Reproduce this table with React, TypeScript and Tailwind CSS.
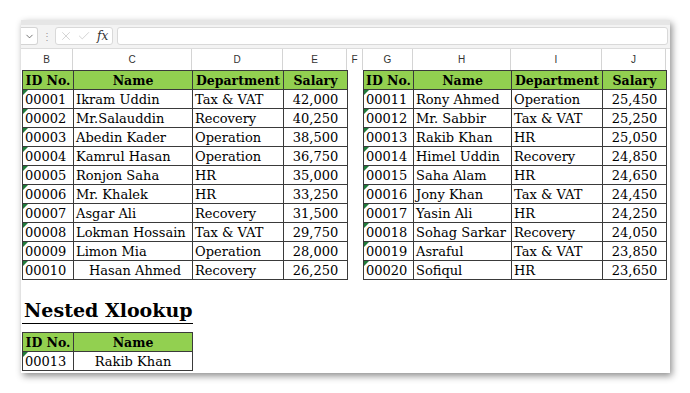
import { X, Check, ChevronDown } from 'lucide-react';

type Row = { id: string; name: string; dept: string; salary: string };

const left: Row[] = [
  { id: '00001', name: 'Ikram Uddin', dept: 'Tax & VAT', salary: '42,000' },
  { id: '00002', name: 'Mr.Salauddin', dept: 'Recovery', salary: '40,250' },
  { id: '00003', name: 'Abedin Kader', dept: 'Operation', salary: '38,500' },
  { id: '00004', name: 'Kamrul Hasan', dept: 'Operation', salary: '36,750' },
  { id: '00005', name: 'Ronjon Saha', dept: 'HR', salary: '35,000' },
  { id: '00006', name: 'Mr. Khalek', dept: 'HR', salary: '33,250' },
  { id: '00007', name: 'Asgar Ali', dept: 'Recovery', salary: '31,500' },
  { id: '00008', name: 'Lokman Hossain', dept: 'Tax & VAT', salary: '29,750' },
  { id: '00009', name: 'Limon Mia', dept: 'Operation', salary: '28,000' },
  { id: '00010', name: 'Hasan Ahmed', dept: 'Recovery', salary: '26,250' },
];

const right: Row[] = [
  { id: '00011', name: 'Rony Ahmed', dept: 'Operation', salary: '25,450' },
  { id: '00012', name: 'Mr. Sabbir', dept: 'Tax & VAT', salary: '25,250' },
  { id: '00013', name: 'Rakib Khan', dept: 'HR', salary: '25,050' },
  { id: '00014', name: 'Himel Uddin', dept: 'Recovery', salary: '24,850' },
  { id: '00015', name: 'Saha Alam', dept: 'HR', salary: '24,650' },
  { id: '00016', name: 'Jony Khan', dept: 'Tax & VAT', salary: '24,450' },
  { id: '00017', name: 'Yasin Ali', dept: 'HR', salary: '24,250' },
  { id: '00018', name: 'Sohag Sarkar', dept: 'Recovery', salary: '24,050' },
  { id: '00019', name: 'Asraful', dept: 'Tax & VAT', salary: '23,850' },
  { id: '00020', name: 'Sofiqul', dept: 'HR', salary: '23,650' },
];

const letters = [
  { l: 'B', w: 'w-[52px]' },
  { l: 'C', w: 'w-[119px]' },
  { l: 'D', w: 'w-[91px]' },
  { l: 'E', w: 'w-[64px]' },
  { l: 'F', w: 'w-[16px]' },
  { l: 'G', w: 'w-[50px]' },
  { l: 'H', w: 'w-[98px]' },
  { l: 'I', w: 'w-[91px]' },
  { l: 'J', w: 'w-[64px]' },
];

// green "number stored as text" flag
function Flag() {
  return (
    <span className="absolute left-0 top-0 w-0 h-0 border-t-[5px] border-t-[#1f7a3a] border-r-[5px] border-r-transparent" />
  );
}

const th = 'border border-[#3a3a3a] bg-[#92d050] font-bold text-center h-[19px] p-0 leading-[17px] text-[12.5px]';
const td = 'border border-[#3a3a3a] h-[19px] p-0 px-[2px] leading-[17px] align-bottom';

function DataTable({ rows, widths }: { rows: Row[]; widths: string[] }) {
  return (
    <table className="table-fixed border-collapse">
      <colgroup>
        {widths.map((w, i) => (
          <col key={i} className={w} />
        ))}
      </colgroup>
      <thead>
        <tr>
          <th className={th}>ID No.</th>
          <th className={th}>Name</th>
          <th className={th}>Department</th>
          <th className={th}>Salary</th>
        </tr>
      </thead>
      <tbody>
        {rows.map((r) => (
          <tr key={r.id}>
            <td className={td + ' relative'}>
              <Flag />
              {r.id}
            </td>
            <td className={td + ' whitespace-nowrap' + (r.name === 'Hasan Ahmed' ? ' pl-[15px]' : '')}>{r.name}</td>
            <td className={td + ' whitespace-nowrap'}>{r.dept}</td>
            <td className={td + ' text-center'}>{r.salary}</td>
          </tr>
        ))}
      </tbody>
    </table>
  );
}

export default function App() {
  return (
    <div className="w-[690px] h-[393px] bg-white overflow-hidden pt-[20px] pl-[21px]">
      <div className="w-[649px] h-[353px] bg-white flex flex-col shadow-[2px_3px_7px_rgba(0,0,0,0.45)]">
        <div className="h-[5px] bg-[#e6e6e6]" />
        <div className="h-[23px] bg-[#f3f3f3] flex items-center pb-[1px]">
          <div className="w-[17px] h-[18px] bg-white border border-l-0 border-[#d4d4d4] rounded-r-[3px] flex items-center justify-center">
            <ChevronDown size={11} strokeWidth={1.6} className="text-[#444]" />
          </div>
          <div className="w-[17px] text-center text-[#999] text-[10px] leading-none">⋮</div>
          <div className="w-[58px] h-[18px] bg-white border border-[#d9d9d9] rounded-[3px] flex items-center pl-[3px] gap-[4px]">
            <X size={14} strokeWidth={1.1} className="text-[#bdbdbd]" />
            <Check size={14} strokeWidth={1.1} className="text-[#bdbdbd]" />
            <span className="text-[12px] italic text-[#333] ml-[2px] font-['DejaVu_Serif',serif]">fx</span>
          </div>
          <div className="ml-[4px] w-[551px] h-[18px] bg-white border border-[#d9d9d9] rounded-[3px]" />
        </div>
        <div className="h-[22px] flex bg-white border-t border-[#dcdcdc]">
          {letters.map((c) => (
            <div
              key={c.l}
              className={c.w + ' border-r border-[#d4d4d4] flex items-center justify-center text-[10px] text-[#333] font-["Liberation_Sans",sans-serif]'}
            >
              {c.l}
            </div>
          ))}
        </div>
        <div className="font-['DejaVu_Serif',serif] text-[13px] text-black">
          <div className="flex pl-[1px] gap-[15px]">
            <DataTable rows={left} widths={['w-[51px]', 'w-[119px]', 'w-[91px]', 'w-[64px]']} />
            <DataTable rows={right} widths={['w-[50px]', 'w-[98px]', 'w-[91px]', 'w-[64px]']} />
          </div>
          <div className="ml-[1px] mt-[15px] w-[171px] h-[29px] border-b border-black flex items-end">
            <span className="text-[19px] font-bold leading-[25px] pl-[2px]">Nested Xlookup</span>
          </div>
          <table className="table-fixed border-collapse mt-[8px] ml-[1px]">
            <colgroup>
              <col className="w-[51px]" />
              <col className="w-[119px]" />
            </colgroup>
            <thead>
              <tr>
                <th className={th}>ID No.</th>
                <th className={th}>Name</th>
              </tr>
            </thead>
            <tbody>
              <tr>
                <td className={td + ' relative'}>
                  <Flag />
                  00013
                </td>
                <td className={td + ' text-center'}>Rakib Khan</td>
              </tr>
            </tbody>
          </table>
        </div>
      </div>
    </div>
  );
}
